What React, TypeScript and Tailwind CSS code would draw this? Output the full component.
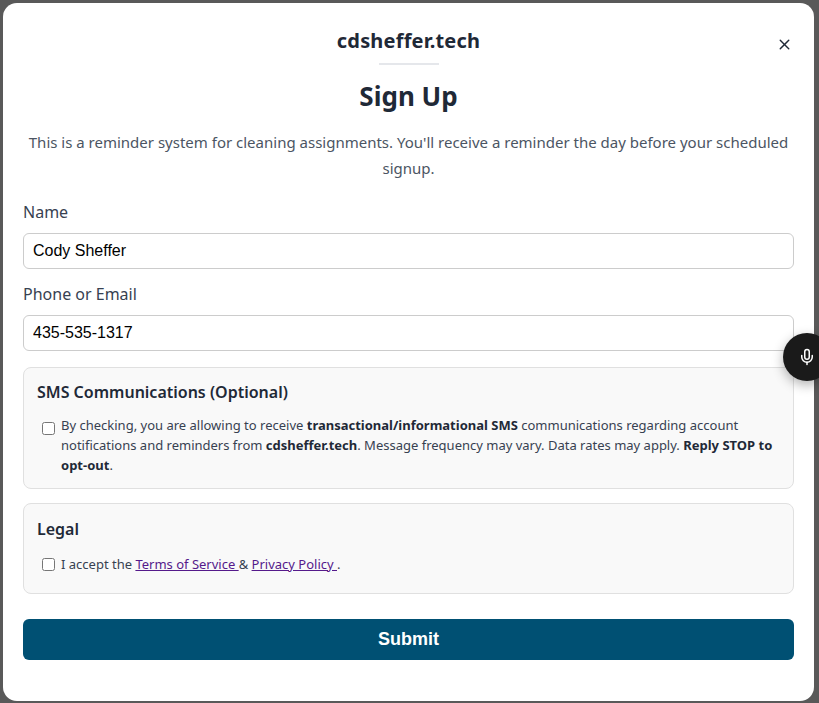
import { Mic, X } from "lucide-react";

const sans = { fontFamily: '"Noto Sans", sans-serif' };

export default function App() {
  return (
    <div className="relative h-[703px] w-[819px] overflow-hidden bg-[#595959] pl-[3px] pt-[3px]" style={sans}>
      <div className="relative h-[698px] w-[811px] rounded-[14px] bg-white px-5 pt-[23px] text-[#1f2937]">
        {/* Header */}
        <button className="absolute right-[21px] top-[33px] text-[#1f2937]">
          <X className="h-[17px] w-[17px]" strokeWidth={2} />
        </button>
        <div className="text-center">
          <div className="text-[20px] font-bold leading-[30px] tracking-[0.2px]">cdsheffer.tech</div>
          <div className="mx-auto mt-[7px] h-0.5 w-[60px] bg-[#e5e7eb]"></div>
          <h1 className="mt-[11px] text-[26px] font-bold leading-[40px]">Sign Up</h1>
          <p className="mt-[13px] text-[15px] leading-[26px] text-[#4b5563]">
            This is a reminder system for cleaning assignments. You'll receive a reminder the day before your scheduled signup.
          </p>
        </div>

        {/* Form */}
        <form className="mt-[19px]">
          <label className="block text-[16px] leading-[24px] text-[#374151]">Name</label>
          <input
            readOnly
            value="Cody Sheffer"
            className="mt-[9px] block h-9 w-full rounded-md border border-[#cccccc] bg-white px-[9px] text-[16px] text-black"
            style={{ fontFamily: '"Liberation Sans", sans-serif' }}
          />
          <label className="mt-[13px] block text-[16px] leading-[24px] text-[#374151]">Phone or Email</label>
          <input
            readOnly
            value="435-535-1317"
            className="mt-[9px] block h-9 w-full rounded-md border border-[#cccccc] bg-white px-[9px] text-[16px] text-black"
            style={{ fontFamily: '"Liberation Sans", sans-serif' }}
          />

          <div className="mt-4 h-[122px] rounded-lg border border-[#e0e0e0] bg-[#f9f9f9] px-[13px] pt-[12px]">
            <h3 className="text-[16px] font-semibold leading-[24px] text-[#1f2937]">SMS Communications (Optional)</h3>
            <label className="mt-[11px] flex items-start gap-[6px] pl-[5px] text-[13px] leading-[20px] text-[#374151]">
              <input type="checkbox" className="mt-[7px] h-[13px] w-[13px] shrink-0" />
              <span>
                By checking, you are allowing to receive <strong className="text-[#1f2937]">transactional/informational SMS</strong> communications regarding account notifications and reminders from <strong className="text-[#1f2937]">cdsheffer.tech</strong>. Message frequency may vary. Data rates may apply. <strong className="text-[#1f2937]">Reply STOP to opt-out</strong>.
              </span>
            </label>
          </div>

          <div className="mt-[14px] h-[91px] rounded-lg border border-[#e0e0e0] bg-[#f9f9f9] px-[13px] pt-[13px]">
            <h3 className="text-[16px] font-semibold leading-[24px] text-[#1f2937]">Legal</h3>
            <label className="mt-[13px] flex items-center gap-[6px] pl-[5px] text-[13px] leading-[20px] text-[#374151]">
              <input type="checkbox" className="h-[13px] w-[13px] shrink-0" />
              <span>
                I accept the <a href="#" className="text-[#551a8b] underline">Terms of Service </a> &amp; <a href="#" className="text-[#551a8b] underline">Privacy Policy </a>.
              </span>
            </label>
          </div>

          <button
            type="button"
            className="mt-[25px] h-[41px] w-full rounded-md bg-[#005073] text-[18px] font-bold text-white"
            style={{ fontFamily: '"Liberation Sans", sans-serif' }}
          >
            Submit
          </button>
        </form>
      </div>

      {/* Floating voice button */}
      <button className="absolute left-[783px] top-[333px] flex h-12 w-12 items-center justify-center rounded-full bg-[#1a1a1a] text-white shadow-[0_4px_12px_rgba(0,0,0,0.3)]">
        <Mic className="h-[18px] w-[18px]" />
      </button>
    </div>
  );
}
